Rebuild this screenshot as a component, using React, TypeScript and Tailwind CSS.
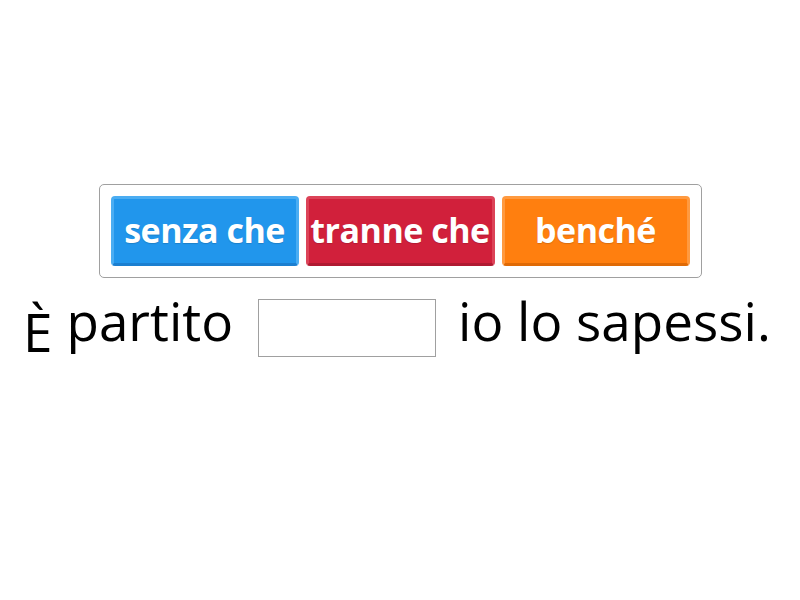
const tiles = [
	{ label: "senza che", cls: "bg-[#2196ec] border-[#4badf2] border-b-[#1b7fd0] w-[188px]" },
	{ label: "tranne che", cls: "bg-[#d1203b] border-[#dc4358] border-b-[#b01a31] w-[189px]" },
	{ label: "benché", cls: "bg-[#ff7f0f] border-[#ff9a40] border-b-[#e06a05] w-[188px]" },
];

export default function App() {
	return (
		<div
			className="w-[800px] h-[600px] bg-white flex flex-col items-center pt-[184px]"
			style={{ fontFamily: '"Open Sans", "Liberation Sans", sans-serif' }}
		>
			{/* word bank */}
			<div className="flex gap-[7px] border border-[#a0a0a0] rounded-[5px] p-[11px]">
				{tiles.map((t) => (
					<div
						key={t.label}
						className={`${t.cls} h-[70px] rounded-[4px] border-[3px] pb-[3px] flex items-center justify-center text-white font-bold text-[34px] tracking-[-0.5px] leading-none whitespace-nowrap [text-shadow:0_1px_1px_rgba(0,0,0,0.15)]`}
					>
						{t.label}
					</div>
				))}
			</div>

			{/* sentence */}
			<div className="w-full flex items-start mt-[7px] pl-[23px] text-[53px] leading-[72px] text-black">
				<span className="mt-[11px] mr-[14px]">È</span>
				<span>partito</span>
				<div className="w-[178px] h-[58px] border border-[#a0a0a0] ml-[25px] mr-[22px] mt-[14px] shrink-0"></div>
				<span className="whitespace-nowrap">io lo sapessi.</span>
			</div>
		</div>
	);
}
